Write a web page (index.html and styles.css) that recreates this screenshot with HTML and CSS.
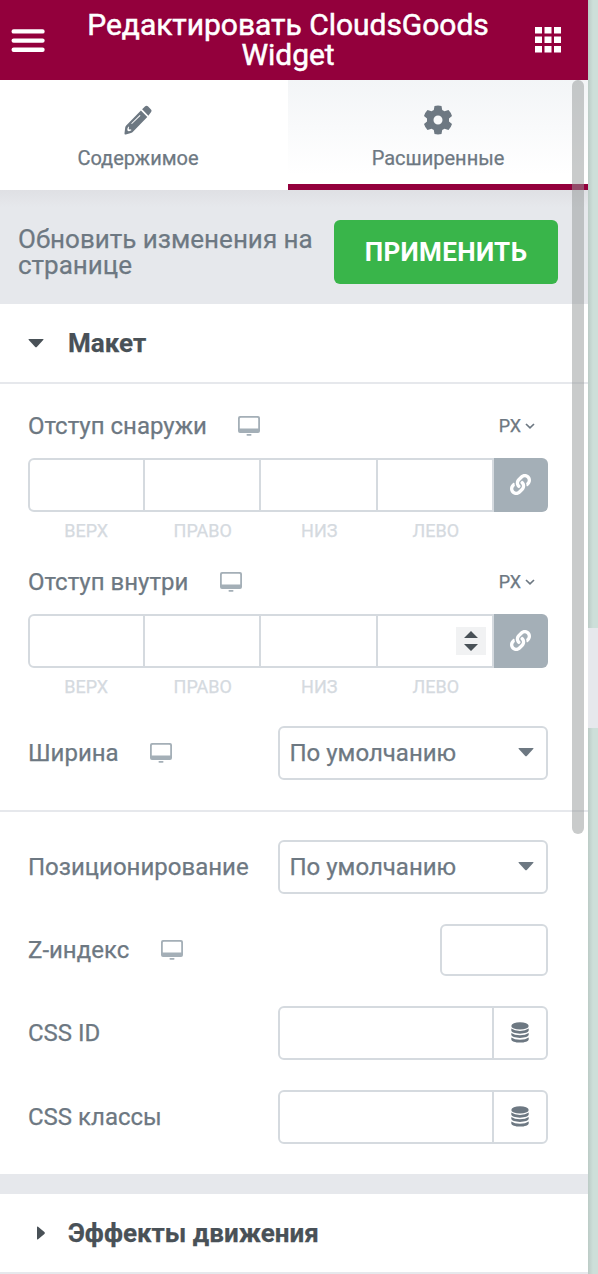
FILE: index.html
```html
<!DOCTYPE html>
<html lang="ru">
<head>
<meta charset="utf-8">
<title>Редактировать CloudsGoods Widget</title>
<link rel="stylesheet" href="styles.css">
</head>
<body>
<svg class="defs" width="0" height="0">
  <symbol id="desktop" viewBox="0 0 22 20">
    <path fill-rule="evenodd" d="M2 0H20Q22 0 22 2V15Q22 17 20 17H2Q0 17 0 15V2Q0 0 2 0ZM2.800 1.800Q1.800 1.800 1.800 2.800V12.500H20.200V2.800Q20.200 1.800 19.200 1.800Z"/>
    <rect x="8.500" y="17.900" width="5" height="1.900" rx=".8"/>
  </symbol>
  <symbol id="link" viewBox="0 0 512 512">
    <path d="M326.612 185.391c59.747 59.809 58.927 155.698.36 214.59-.11.12-.24.25-.36.37l-67.2 67.2c-59.27 59.27-155.699 59.262-214.96 0-59.27-59.26-59.27-155.7 0-214.96l37.106-37.106c9.84-9.84 26.786-3.3 27.294 10.606.648 17.722 3.826 35.527 9.69 52.721 1.986 5.822.567 12.262-3.783 16.612l-13.087 13.087c-28.026 28.026-28.905 73.66-1.155 101.96 28.024 28.579 74.086 28.749 102.325.51l67.2-67.19c28.191-28.191 28.073-73.757 0-101.83-3.701-3.694-7.429-6.564-10.341-8.569a16.037 16.037 0 0 1-6.947-12.606c-.396-10.567 3.348-21.456 11.698-29.806l21.054-21.055c5.521-5.521 14.182-6.199 20.584-1.731a152.482 152.482 0 0 1 20.522 17.197zM467.547 44.449c-59.261-59.262-155.69-59.27-214.96 0l-67.2 67.2c-.12.12-.25.25-.36.37-58.566 58.892-59.387 154.781.36 214.59a152.454 152.454 0 0 0 20.521 17.196c6.402 4.468 15.064 3.789 20.584-1.731l21.054-21.055c8.35-8.35 12.094-19.239 11.698-29.806a16.037 16.037 0 0 0-6.947-12.606c-2.912-2.005-6.64-4.875-10.341-8.569-28.073-28.073-28.191-73.639 0-101.83l67.2-67.19c28.239-28.239 74.3-28.069 102.325.51 27.75 28.3 26.872 73.934-1.155 101.96l-13.087 13.087c-4.35 4.35-5.769 10.79-3.783 16.612 5.864 17.194 9.042 34.999 9.69 52.721.509 13.906 17.454 20.446 27.294 10.606l37.106-37.106c59.271-59.259 59.271-155.699.001-214.959z"/>
  </symbol>
  <symbol id="database" viewBox="0 0 18 21">
    <ellipse cx="9" cy="3.900" rx="8.700" ry="3.700"/>
    <path d="M.3 6.600Q3.500 9 9 9T17.700 6.600V8.600C17.700 10.200 13.800 11.700 9 11.700S.3 10.200.3 8.600Z"/>
    <path d="M.3 11Q3.500 13.300 9 13.300T17.700 11V12.800C17.700 14.400 13.800 15.900 9 15.900S.3 14.400.3 12.800Z"/>
    <path d="M.3 15.400Q3.500 17.700 9 17.700T17.700 15.400V17.400C17.700 19 13.800 20.600 9 20.600S.3 19 .3 17.400Z"/>
  </symbol>
  <symbol id="caret" viewBox="0 0 16 10"><path d="M1.200 0H14.800Q16.200 0 15.200 1.100L9 7.800Q8 8.800 7 7.800L.8 1.100Q-.2 0 1.200 0Z"/></symbol>
  <symbol id="chevron" viewBox="0 0 10 6"><path d="M1 1L5 4.800L9 1" fill="none" stroke="currentColor" stroke-width="1.700"/></symbol>
</svg>

<div class="screen">
  <main class="panel">
    <header class="header">
      <svg class="menu" viewBox="0 0 34 24"><path d="M2.700 2.400H31.500M2.700 11.600H31.500M2.700 20.700H31.500" stroke="#fff" stroke-width="4.400" stroke-linecap="round"/></svg>
      <h1 class="title">Редактировать CloudsGoods Widget</h1>
      <svg class="apps" viewBox="0 0 26 26"><path d="M0 0h7v6.500H0zM9.500 0h7v6.500h-7zM19 0h7v6.500h-7zM0 9.500h7V16H0zM9.500 9.500h7V16h-7zM19 9.500h7V16h-7zM0 19h7v6.500H0zM9.500 19h7v6.500h-7zM19 19h7v6.500h-7z"/></svg>
    </header>

    <nav class="tabs">
      <div class="tab">
        <svg class="tab-icon" viewBox="0 0 28 30">
          <path fill-rule="evenodd" d="M16.900 5.400L23.300 12L9.200 26.600Q8.200 27.700 6.900 28.100L1.800 29.400Q.3 29.800.5 28.200L1.200 22.600Q1.300 21.500 2.200 20.500ZM15.800 10.100L7.200 18.400L7.900 19.100L16.500 10.800ZM4.200 21.800Q2.900 24 3.500 25.500Q4.500 27 7.400 25.200L7 24.200Q5.200 24.700 4.900 24Q4.500 23.300 5.100 21.800Z"/>
          <path d="M18.100 4.200L21.200 1.200Q22.600.2 23.900 1.300L27 4.600Q28.100 5.800 27.100 7L24.400 10.700Z"/>
        </svg>
        <span>Содержимое</span>
      </div>
      <div class="tab active">
        <svg class="tab-icon" viewBox="0 0 28 30">
          <path fill-rule="evenodd" d="M10.500 1Q14 .2 17.500 1L18.200 5L20.500 6.300L24.500 5Q27 7.500 28 11L25 13.600V16.400L28 19Q27 22.500 24.500 25L20.500 23.700L18.200 25L17.500 29Q14 29.800 10.500 29L9.800 25L7.500 23.700L3.500 25Q1 22.500 0 19L3 16.400V13.600L0 11Q1 7.500 3.500 5L7.500 6.300L9.800 5ZM14 10.500A4.500 4.500 0 1 0 14 19.500A4.500 4.500 0 1 0 14 10.500Z"/>
        </svg>
        <span>Расширенные</span>
      </div>
    </nav>

    <section class="update">
      <p class="update-text">Обновить изменения на странице</p>
      <button class="apply">ПРИМЕНИТЬ</button>
    </section>

    <h2 class="section-title"><span class="arrow"><svg class="caret-down"><use href="#caret"/></svg></span>Макет</h2>

    <section class="controls">
      <div class="dimension">
        <div class="dim-head"><label>Отступ снаружи</label><svg class="desktop"><use href="#desktop"/></svg><span class="unit">PX<svg class="chevron"><use href="#chevron"/></svg></span></div>
        <div class="dim-fields"><i class="cell"></i><i class="cell"></i><i class="cell"></i><i class="cell"></i><button class="link"><svg><use href="#link"/></svg></button></div>
        <div class="dim-names"><span>ВЕРХ</span><span>ПРАВО</span><span>НИЗ</span><span>ЛЕВО</span></div>
      </div>
      <div class="dimension">
        <div class="dim-head"><label>Отступ внутри</label><svg class="desktop"><use href="#desktop"/></svg><span class="unit">PX<svg class="chevron"><use href="#chevron"/></svg></span></div>
        <div class="dim-fields"><i class="cell"></i><i class="cell"></i><i class="cell"></i><i class="cell"><svg class="spinner" viewBox="0 0 30 28"><path d="M8 11L15 4L22 11ZM8 17H22L15 24Z"/></svg></i><button class="link"><svg><use href="#link"/></svg></button></div>
        <div class="dim-names"><span>ВЕРХ</span><span>ПРАВО</span><span>НИЗ</span><span>ЛЕВО</span></div>
      </div>
      <div class="row"><label>Ширина</label><svg class="desktop"><use href="#desktop"/></svg><div class="select">По умолчанию<svg class="caret-down"><use href="#caret"/></svg></div></div>
    </section>

    <section class="controls stacked">
      <div class="row"><label>Позиционирование</label><div class="select">По умолчанию<svg class="caret-down"><use href="#caret"/></svg></div></div>
      <div class="row"><label>Z-индекс</label><svg class="desktop"><use href="#desktop"/></svg><div class="number"></div></div>
      <div class="row"><label>CSS ID</label><div class="text-field"><span class="dynamic"><svg><use href="#database"/></svg></span></div></div>
      <div class="row"><label>CSS классы</label><div class="text-field"><span class="dynamic"><svg><use href="#database"/></svg></span></div></div>
    </section>

    <h2 class="section-title next"><span class="arrow"><svg class="caret-right" viewBox="0 0 8 14"><path d="M0 1.200Q0-.2 1.100.8L7.400 6Q8.300 7 7.400 8L1.100 13.200Q0 14.200 0 12.800Z"/></svg></span>Эффекты движения</h2>
  </main>
  <aside class="preview"><div class="handle"></div></aside>
  <div class="scrollbar"></div>
</div>
</body>
</html>
```

FILE: styles.css
```css
* { box-sizing: border-box; }
body { margin: 0; font-family: Roboto, "Noto Sans", sans-serif; color: #6d7882; background: #fff; -webkit-text-stroke: .25px; }
h1, h2, p { margin: 0; }
svg { display: block; fill: currentColor; flex: none; }
button { border: 0; padding: 0; font-family: inherit; color: #fff; }
.defs { position: absolute; }

.screen { position: relative; display: flex; width: 598px; height: 1274px; overflow: hidden; }
.panel { width: 588px; background: #fff; }

.header { display: flex; align-items: center; height: 80px; padding: 0 27px 0 11px; background: #93003c; color: #fff; }
.menu { width: 34px; height: 24px; margin-top: 2px; }
.title { flex: 1; padding: 0 39px 0 35px; font-size: 30px; line-height: 30px; font-weight: 400; text-align: center; letter-spacing: -.03px; -webkit-text-stroke: .5px; }
.apps { width: 26px; height: 26px; }

.tabs { display: flex; height: 110px; }
.tab { display: flex; flex-direction: column; align-items: center; width: 288px; padding-top: 25px; font-size: 20px; line-height: 24px; }
.tab span { margin-top: 11px; }
.tab:first-child { padding-right: 12px; }
.tab.active { width: 300px; background: linear-gradient(#f3f5f7, #fff 95px); border-bottom: 6px solid #93003c; }
.tab-icon { width: 28px; height: 30px; }

.update { display: flex; align-items: center; justify-content: space-between; height: 114px; padding: 10px 30px 0 18px; background: linear-gradient(#dfe0e4, #e6e8ec 17px); }
.update-text { width: 310px; margin-top: -1px; font-size: 26px; line-height: 26px; }
.apply { width: 224px; height: 64px; border-radius: 6px; background: #39b54a; font-size: 26px; font-weight: 700; letter-spacing: .35px; -webkit-text-stroke: 0; }

.section-title { display: flex; align-items: center; height: 80px; padding-left: 28px; border-bottom: 2px solid #e6e8ec; color: #495157; font-size: 26px; font-weight: 700; }
.arrow { width: 40px; }
.caret-down { width: 16px; height: 10px; }
.section-title .caret-down { margin-top: 2px; }
.caret-right { width: 8px; height: 14px; margin-left: 9px; }

.controls { padding: 30px 40px 30px 28px; border-bottom: 2px solid #e6e8ec; font-size: 24px; line-height: 28px; }
.dimension { height: 156px; }
.dim-head { display: flex; align-items: center; height: 24px; margin-bottom: 20px; }
.desktop { width: 22px; height: 20px; margin-left: 31.400px; color: #a4afb7; }
.unit { display: flex; align-items: center; gap: 4px; margin-left: auto; margin-right: 13px; font-size: 18px; }
.chevron { width: 10px; height: 6px; }
.dim-fields { display: flex; height: 54px; }
.cell { display: flex; align-items: center; justify-content: flex-end; width: 116.500px; padding-right: 6px; border: 2px solid #d5dadf; border-left: 0; }
.cell:first-child { border-left: 2px solid #d5dadf; border-radius: 6px 0 0 6px; }
.spinner { width: 30px; height: 28px; background: #f1f2f3; color: #495157; }
.link { display: flex; align-items: center; justify-content: center; width: 54px; padding: 0 1px 1px 0; border-radius: 0 6px 6px 0; background: #a4afb7; }
.link svg { width: 21px; height: 21px; }
.dim-names { display: flex; padding-top: 5px; color: #d5dadf; font-size: 18px; }
.dim-names span { width: 116.500px; text-align: center; }

.row { display: flex; align-items: center; }
.select, .text-field, .number { margin-left: auto; height: 54px; border: 2px solid #d5dadf; border-radius: 6px; }
.select { display: flex; align-items: center; justify-content: space-between; width: 270px; padding: 0 12px 0 9.500px; }
.number { width: 108px; height: 52px; }
.text-field { display: flex; justify-content: flex-end; width: 270px; }
.dynamic { display: flex; align-items: center; justify-content: center; width: 54px; padding: 0 1px 1px 0; border-left: 2px solid #d5dadf; }
.dynamic svg { width: 18px; height: 21px; }
.controls.stacked { display: flex; flex-direction: column; padding-top: 28px; gap: 30px; border-bottom: 20px solid #e6e8ec; }

.preview { width: 10px; padding-top: 628px; background: linear-gradient(90deg, #bccbc6, #cddfd9 5px); }
.handle { height: 100px; background: #e6e8ec; }
.scrollbar { position: absolute; left: 572px; top: 80px; width: 12px; height: 754px; border-radius: 6px; background: rgba(148, 152, 151, .5); }
```
